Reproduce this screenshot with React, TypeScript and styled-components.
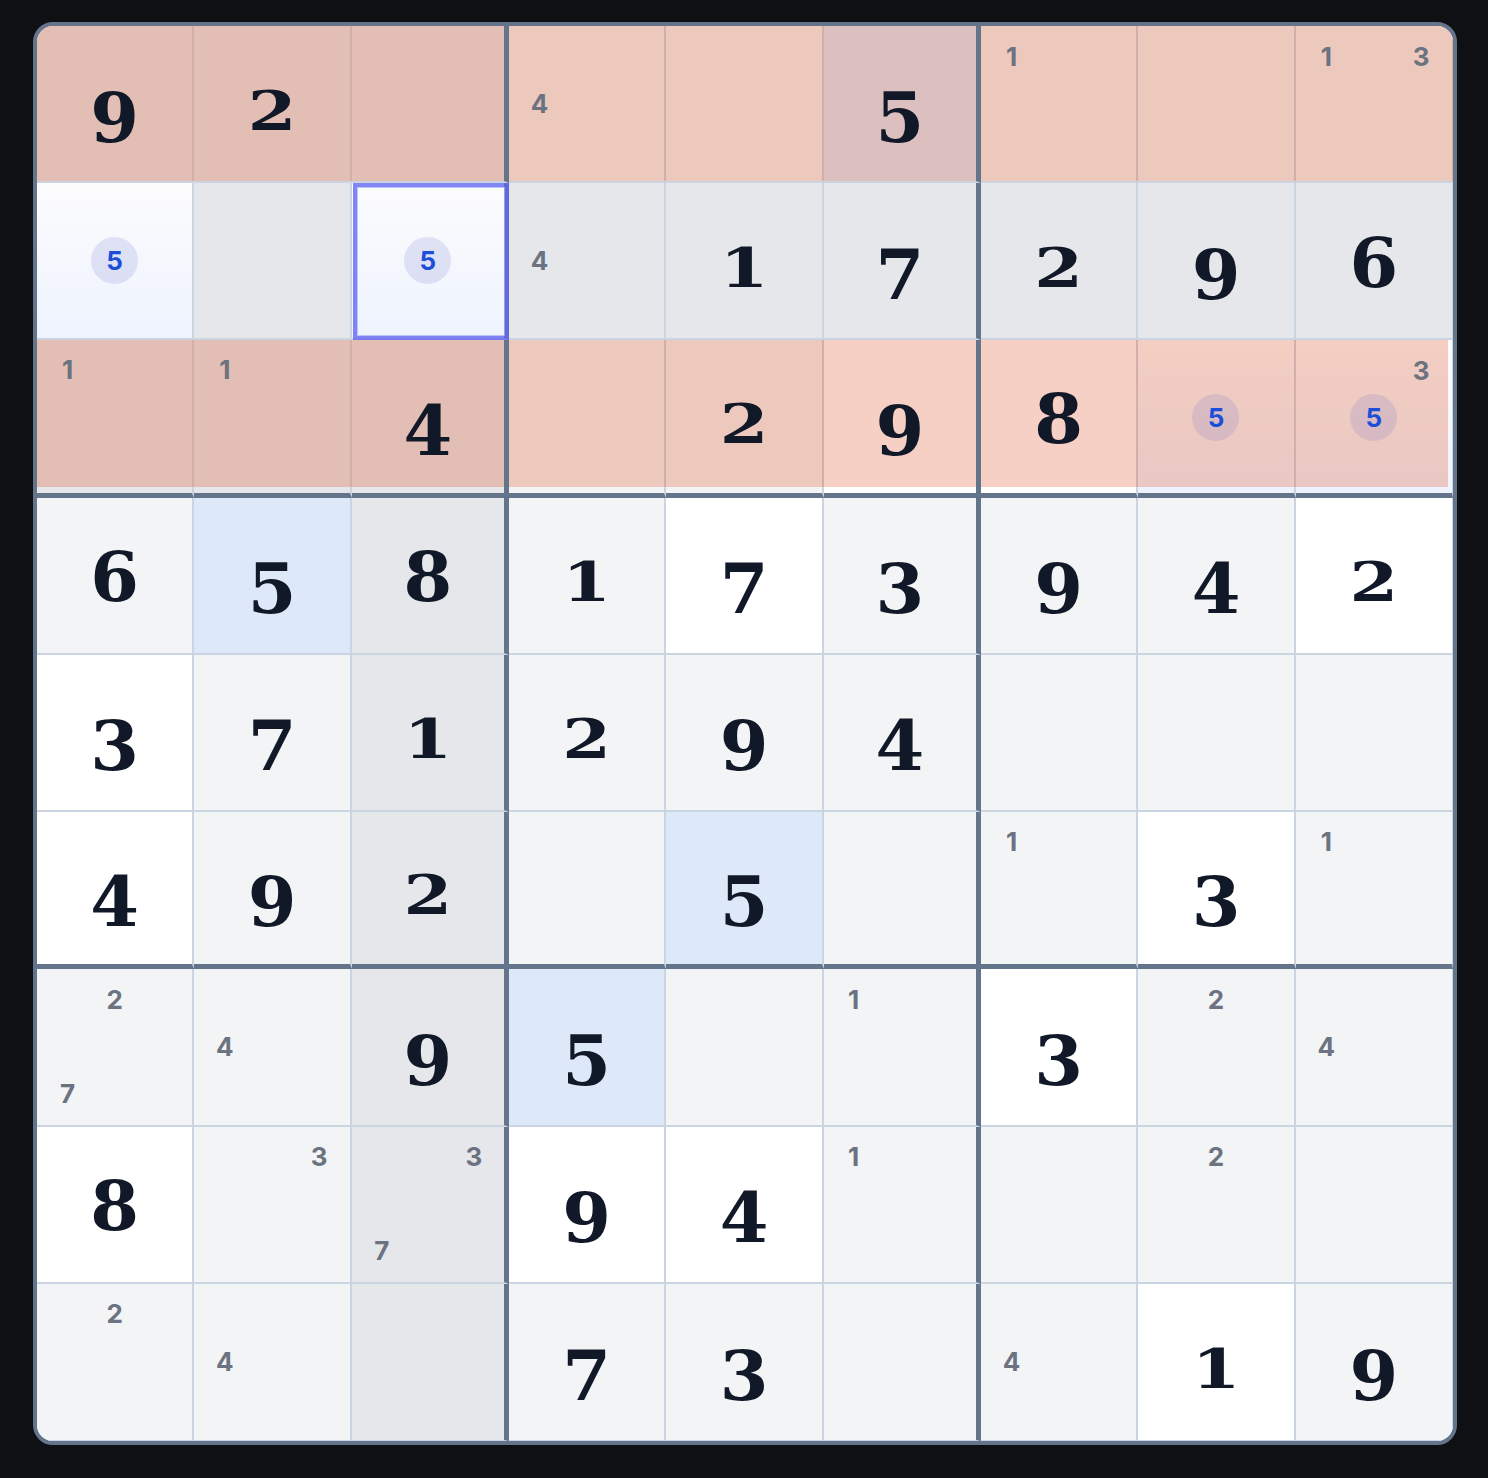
import styled, { createGlobalStyle } from "styled-components";

type Bg = "w" | "g" | "p" | "s" | "c" | "x";

// value or notes ("n" + digits), then the base shade of the cell
const rows: string[][] = [
  ["9:p", "2:p", ":p", "n4:g", ":g", "5:s", "n1:g", ":g", "n13:g"],
  ["n5:c", ":p", "n5:x", "n4:p", "1:p", "7:p", "2:p", "9:p", "6:p"],
  ["n1:p", "n1:p", "4:p", ":g", "2:g", "9:w", "8:w", "n5:c", "n35:c"],
  ["6:g", "5:s", "8:p", "1:g", "7:w", "3:g", "9:g", "4:g", "2:w"],
  ["3:w", "7:g", "1:p", "2:g", "9:g", "4:g", ":g", ":g", ":g"],
  ["4:w", "9:g", "2:p", ":g", "5:s", ":g", "n1:g", "3:w", "n1:g"],
  ["n27:g", "n4:g", "9:p", "5:s", ":g", "n1:g", "3:w", "n2:g", "n4:g"],
  ["8:w", "n3:g", "n37:p", "9:w", "4:w", "n1:g", ":g", "n2:g", ":g"],
  ["n2:g", "n4:g", ":p", "7:g", "3:g", ":g", "n4:g", "1:w", "9:g"],
];

const activeNumber = 5;
const conflictRows: Record<number, "full" | "easing"> = { 0: "full", 2: "easing" };

const shades: Record<Bg, string> = {
  w: "#ffffff",
  g: "#f3f4f6",
  p: "#e5e7eb",
  s: "#dde8f9",
  c: "linear-gradient(180deg, #fcfcfd 0%, #eef3fe 100%)",
  x: "linear-gradient(180deg, #fcfcfd 0%, #eef3fe 100%)",
};

// old-style figures: 0-2 sit at x-height, 6 and 8 rise, the rest drop
const figureShape = (d: number) =>
  d <= 2 ? "small" : d === 6 || d === 8 ? "rise" : "drop";

const GlobalStyle = createGlobalStyle`
  html, body {
    margin: 0;
    background: #0f1013;
  }
  body {
    font-family: Inter, "Noto Sans", sans-serif;
  }
`;

const Page = styled.div`
  padding: 22px 0 0 33px;
  min-height: 1456px;
`;

const Board = styled.div`
  position: relative;
  isolation: isolate;
  box-sizing: border-box;
  width: 1424px;
  height: 1423px;
  border: 4px solid #64748b;
  border-radius: 20px;
  overflow: hidden;
  display: grid;
  grid-template-columns: repeat(9, minmax(0, 1fr));
  grid-template-rows: repeat(9, minmax(0, 1fr));
  background: #f3f4f6;
`;

const lineColor = (w: number) => (w > 2 ? "#64748b" : "#cbd5e1");

const Cell = styled.div<{
  $bg: Bg;
  $right: number;
  $bottom: number;
  $tint?: { right: number; bottom: number };
}>`
  position: relative;
  box-sizing: border-box;
  display: grid;
  background: ${(p) => shades[p.$bg]};
  border-right: ${(p) => p.$right}px solid ${(p) => lineColor(p.$right)};
  border-bottom: ${(p) => p.$bottom}px solid ${(p) => lineColor(p.$bottom)};

  ${(p) =>
    p.$tint &&
    `
    &::before {
      content: "";
      position: absolute;
      z-index: 1;
      top: 0;
      left: 0;
      right: ${p.$tint.right}px;
      bottom: ${p.$tint.bottom}px;
      background: rgba(220, 68, 20, 0.25);
      pointer-events: none;
    }
  `}

  ${(p) =>
    p.$bg === "x" &&
    `
    &::after {
      content: "";
      position: absolute;
      z-index: 3;
      top: 0;
      left: 1px;
      right: -${p.$right}px;
      bottom: -${p.$bottom}px;
      border: 4px solid rgba(99, 102, 241, 0.8);
      box-shadow: inset 0 0 0 1px rgba(165, 180, 252, 0.75);
      pointer-events: none;
    }
  `}
`;

const Digit = styled.span<{ $shape: string }>`
  position: relative;
  z-index: 2;
  place-self: center;
  display: block;
  font-family: "DejaVu Serif", "Liberation Serif", serif;
  font-weight: 700;
  font-size: 70px;
  line-height: 70px;
  color: #111827;
  transform-origin: 50% 59px;
  transform: ${(p) =>
    p.$shape === "small"
      ? "translateY(2px) scaleY(0.765)"
      : p.$shape === "drop"
      ? "translateY(14px)"
      : "translateY(2px)"};
`;

const NoteGrid = styled.div`
  position: relative;
  z-index: 2;
  box-sizing: border-box;
  padding: 7px;
  display: grid;
  grid-template-columns: repeat(3, minmax(0, 1fr));
  grid-template-rows: repeat(3, minmax(0, 1fr));
`;

const Note = styled.span<{ $n: number; $hot: boolean }>`
  grid-row: ${(p) => Math.ceil(p.$n / 3)};
  grid-column: ${(p) => ((p.$n - 1) % 3) + 1};
  place-self: center;
  display: flex;
  align-items: center;
  justify-content: center;
  font-family: Inter, "Noto Sans", sans-serif;
  font-size: 26px;
  line-height: 1;
  font-weight: 700;
  color: ${(p) => (p.$hot ? "#1d4ed8" : "#6b7280")};
  ${(p) =>
    p.$hot &&
    `
    width: 47px;
    height: 47px;
    border-radius: 50%;
    background: rgba(100, 108, 200, 0.16);
  `}
`;

const App = () => {
  return (
    <>
      <GlobalStyle />
      <Page>
        <Board>
          {rows.map((row, r) =>
            row.map((spec, c) => {
              const [content, bg] = spec.split(":") as [string, Bg];
              const right = c === 8 ? 1 : c % 3 === 2 ? 5 : 2;
              const bottom = r === 8 ? 1 : r % 3 === 2 ? 5 : 2;
              const mode = conflictRows[r];
              const tint = mode
                ? {
                    right: right <= 2 ? (c === 8 ? (mode === "easing" ? 4 : -1) : -right) : 0,
                    bottom: mode === "easing" ? 6 : 0,
                  }
                : undefined;
              return (
                <Cell
                  key={`${r}-${c}`}
                  $bg={bg}
                  $right={right}
                  $bottom={bottom}
                  $tint={tint}
                >
                  {content.startsWith("n") ? (
                    <NoteGrid>
                      {content
                        .slice(1)
                        .split("")
                        .map((d) => (
                          <Note key={d} $n={+d} $hot={+d === activeNumber}>
                            {d}
                          </Note>
                        ))}
                    </NoteGrid>
                  ) : content ? (
                    <Digit $shape={figureShape(+content)}>{content}</Digit>
                  ) : null}
                </Cell>
              );
            })
          )}
        </Board>
      </Page>
    </>
  );
};

export default App;
